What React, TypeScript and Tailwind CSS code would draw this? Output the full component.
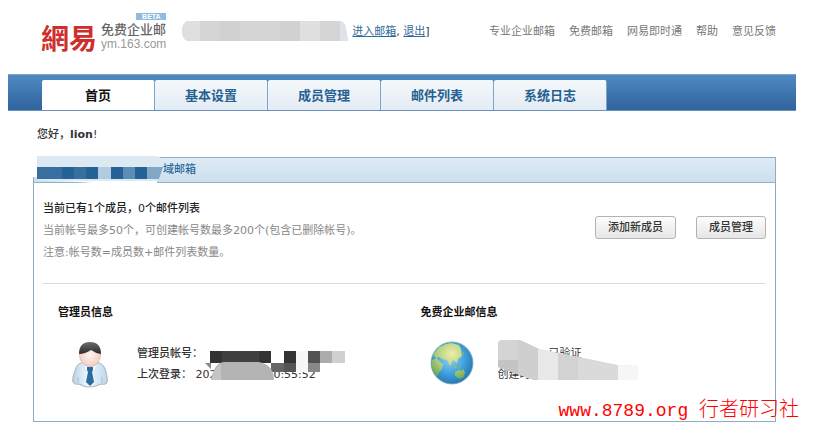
import { clsx } from 'clsx';

const tabs = ['首页', '基本设置', '成员管理', '邮件列表', '系统日志'];

const topLinks = ['专业企业邮箱', '免费邮箱', '网易即时通', '帮助', '意见反馈'];

const Logo = () => (
  <a href="#" className="relative flex items-center">
    <span className="w-[60px] text-[28px] leading-[30px] font-bold text-[#cf2f2c] font-['Noto_Sans_CJK_TC',sans-serif]">
      網易
    </span>
    <span className="flex flex-col text-[13px] leading-[14px]">
      <span className="font-medium text-[#666]">免费企业邮</span>
      <span className="text-xs leading-[14px] text-[#999] font-['Liberation_Sans',sans-serif]">ym.163.com</span>
    </span>
    <span className="absolute -top-[9px] right-0 w-[30px] bg-[#8fbce0] text-center text-[7px] leading-[7px] font-bold text-white font-['Liberation_Sans',sans-serif]">
      BETA
    </span>
  </a>
);

const MaskedAccount = () => (
  <svg width="166" height="21" viewBox="0 0 166 21" aria-hidden="true">
    <defs>
      <clipPath id="account">
        <path d="M5 0H159Q164 3 164 8L166 20H5Q0 17 0 10Q0 3 5 0Z" />
      </clipPath>
    </defs>
    <g clipPath="url(#account)">
      <path fill="#d5d5d5" d="M0 0h166v21H0z" />
      <path fill="#dfdfdf" d="M0 0h18v21H0zM118 0h20v21h-20z" />
      <path fill="#d1d1d1" d="M38 0h20v21H38zM98 0h20v21H98z" />
      <path fill="#dce3e9" d="M158 0h8v21h-8z" />
    </g>
  </svg>
);

const MaskedDomain = () => (
  <svg width="130" height="29" viewBox="0 0 130 29" aria-hidden="true">
    <path fill="#fff" d="M0 0h4v22H0z" />
    <path fill="#fff" d="M4 0h120v4H4z" />
    <path fill="#dce9f3" d="M4 1H124L128 3V17L124 27H26L4 25Z" />
    <path fill="#386f9f" d="M4 12h25v12H4z" />
    <path fill="#256297" d="M29 12h12v12H29zM53 12h12v12H53zM78 12h12v12H78zM102 12h12v12h-12z" />
    <path fill="#386f9f" d="M41 12h12v12H41z" />
    <path fill="#256297" d="M53 12h12v12H53z" />
    <path fill="#b3cbe0" d="M65 12h13v12H65z" />
    <path fill="#5d8cb4" d="M90 12h12v12H90z" />
    <path fill="#82a6c6" d="M114 12h16l-4 12h-12z" />
    <path fill="#fff" d="M28 26H124V28H60Z" />
  </svg>
);

const MaskedLogin = () => (
  <svg width="140" height="32" viewBox="0 0 140 32" aria-hidden="true">
    <path fill="#333" d="M5 2h12v12H5zM54 2h12v12H54zM79 2h12v12H79z" />
    <path fill="#404040" d="M17 2h37v12H17z" />
    <path fill="#525252" d="M103 2h12v12h-12z" />
    <path fill="#acacac" d="M115 2h12v12h-12z" />
    <path fill="#d0d0d0" d="M127 2h13v12h-13z" />
    <path fill="#f7f7f7" d="M91 2h12v21H91z" />
    <path fill="#666" d="M66 14h13v9H66z" />
    <path fill="#555" d="M79 14h12v9H79z" />
    <path fill="#888" d="M103 14h12v9h-12z" />
    <path fill="#888" d="M0 14h6v6z" />
    <path fill="#b4b4b4" d="M6 31Q9 14 19 13H54Q69 16 69 31Z" />
    <path fill="#c4c4c4" d="M6 31Q8 20 16 15V31Z" />
  </svg>
);

const MaskedDetails = () => (
  <svg width="140" height="42" viewBox="0 0 140 42" aria-hidden="true">
    <defs>
      <clipPath id="details">
        <path d="M0 3Q1 0 4 0H22L41 9L80 17L119 25L140 26V40H36L14 32L0 27Z" />
      </clipPath>
    </defs>
    <g clipPath="url(#details)">
      <path fill="#d4d4d4" d="M0 0h140v42H0z" />
      <path fill="#c4c4c4" d="M0 20h20v22H0z" />
      <path fill="#cfcfcf" d="M20 0h20v42H20z" />
      <path fill="#e8e8e8" d="M40 0h20v42H40z" />
      <path fill="#d2d2d2" d="M60 0h20v42H60z" />
      <path fill="#dadada" d="M80 0h40v42H80z" />
      <path fill="#f6f6f6" d="M120 0h20v42h-20z" />
    </g>
  </svg>
);

const UserIcon = () => (
  <svg width="38" height="48" viewBox="0 0 38 48" className="shrink-0" aria-hidden="true">
    <defs>
      <linearGradient id="shirt" x1="0" y1="0" x2="1" y2="0">
        <stop offset="0" stopColor="#b7d4ec" />
        <stop offset=".45" stopColor="#f0f7fd" />
        <stop offset="1" stopColor="#bdd8ee" />
      </linearGradient>
      <radialGradient id="face">
        <stop offset="0" stopColor="#fff4ef" />
        <stop offset="1" stopColor="#f3cfc5" />
      </radialGradient>
      <linearGradient id="hair" x1="0" y1="0" x2="0" y2="1">
        <stop offset="0" stopColor="#6b6b6b" />
        <stop offset="1" stopColor="#2c2c2c" />
      </linearGradient>
    </defs>
    <path d="M10 22Q6 23 4 30Q1 37 2 41Q4 44 8 43Q18 49 30 43Q35 44 36 41Q37 36 34 28Q32 23 28 22Z" fill="url(#shirt)" stroke="#b4bac1" strokeWidth="1.2" />
    <path d="M7 36V42M31 36V42" stroke="#a9bccd" strokeWidth="1" />
    <path d="M12 24L19 26L26 24L23 31L19 27L15 31Z" fill="#f5f9fd" stroke="#d0dce8" strokeWidth=".6" />
    <path d="M16 26H22L22 29L21 31L23 41L19 45L15 41L17 31L16 29Z" fill="#286d9e" />
    <ellipse cx="19" cy="14" rx="10.5" ry="11.5" fill="url(#face)" stroke="#d8b5aa" strokeWidth=".7" />
    <path d="M8 13Q8 1 19 1Q30 1 30 13Q24 12 20 9Q14 13 8 13Z" fill="url(#hair)" />
  </svg>
);

const GlobeIcon = () => (
  <svg width="44" height="44" viewBox="0 0 44 44" className="shrink-0" aria-hidden="true">
    <defs>
      <radialGradient id="ocean" cx=".45" cy=".4" r=".6">
        <stop offset="0" stopColor="#8fd2f3" />
        <stop offset=".6" stopColor="#409fda" />
        <stop offset="1" stopColor="#2679b4" />
      </radialGradient>
      <radialGradient id="land" cx="22" cy="13" r="26" gradientUnits="userSpaceOnUse">
        <stop offset="0" stopColor="#f0edaa" />
        <stop offset=".6" stopColor="#acce7b" />
        <stop offset="1" stopColor="#73aa55" />
      </radialGradient>
    </defs>
    <circle cx="22" cy="22" r="21" fill="url(#ocean)" stroke="#83a9bd" strokeWidth=".8" />
    <path fill="url(#land)" d="M3 14Q9 3 21 2L29 4L31 8L32 15L28 18L27 22L23 19L20 25L17 19L12 18L9 16L6 17L4 15Z" />
    <path fill="url(#land)" d="M2 19L7 17L10 21L13 23L12 28L9 31L7 36L3 30L1 24Z" />
    <path fill="url(#land)" d="M25 31L29 29L31 30L33 28L35 31L34 36L30 38L25 35Z" />
    <path fill="#90bb5a" d="M24 23L27 26L25 27ZM28 25L31 27L29 28ZM33 9L34 13L33 15Z" />
  </svg>
);

const PanelButton = ({ label }: { label: string }) => (
  <button
    type="button"
    className="h-[23px] rounded-[3px] border border-[#b3b3b3] bg-linear-to-b from-[#fdfdfd] to-[#e6e6e6] px-3 leading-5 font-medium text-[#333]"
  >
    {label}
  </button>
);

const App = () => {
  return (
    <div className="relative pl-2 pr-[23px] text-[11px] leading-[21px] text-[#333] font-['DejaVu_Sans','Noto_Sans_CJK_SC',sans-serif]">
      <header className="flex items-center h-[74px] pl-[33px] pr-5">
        <Logo />
        <div className="flex items-center gap-1 ml-4 -mt-3">
          <MaskedAccount />
          <div className="whitespace-nowrap">
            <a href="#" className="text-[#2d6a9b] underline">进入邮箱</a>, <a href="#" className="text-[#2d6a9b] underline">退出</a>]
          </div>
        </div>
        <nav className="ml-auto -mt-3 flex gap-[14px] whitespace-nowrap text-[#777]">
          {topLinks.map((link) => (
            <a key={link} href="#">{link}</a>
          ))}
        </nav>
      </header>

      <nav className="flex h-[37px] border-y border-[#7ba5cd] border-b-[#6b93b9] bg-linear-to-b from-[#5089c1] to-[#2f639d] pt-[5px] pl-[34px]">
        {tabs.map((tab, i) => (
          <a
            key={tab}
            href="#"
            className={clsx(
              'flex w-[113px] items-center justify-center rounded-t-xs border-r border-[#7fa5c5] text-[13px] font-bold',
              i === 0 ? 'bg-white text-[#111]' : 'bg-linear-to-b from-[#f5f8fb] to-[#e3ecf4] text-[#256090]'
            )}
          >
            {tab}
          </a>
        ))}
      </nav>

      <main className="pl-[25px] pr-5">
        <p className="pt-[13px] pb-3 pl-1 font-medium">
          您好，<b>lion</b>!
        </p>

        <section className="relative border border-[#8eadc3]">
          <h2 className="h-[25px] border-b border-[#8fb2c9] bg-linear-to-b from-[#dfebf5] to-[#cbdfed] pl-[129px] leading-6 font-medium text-[#2d6b98]">
            域邮箱
          </h2>
          <div className="absolute -top-[3px] -left-px">
            <MaskedDomain />
          </div>

          <div className="mx-[9px] flex items-start justify-between border-b border-[#ddd] pt-[15px] pb-[19px]">
            <div className="leading-[22px] text-[#888]">
              <p className="font-medium text-[#222]">当前已有1个成员，0个邮件列表</p>
              <p>当前帐号最多50个，可创建帐号数最多200个(包含已删除帐号)。</p>
              <p>注意:帐号数=成员数+邮件列表数量。</p>
            </div>
            <div className="flex gap-5 pt-[18px]">
              <PanelButton label="添加新成员" />
              <PanelButton label="成员管理" />
            </div>
          </div>

          <div className="flex pt-[18px] pb-8 pl-6">
            <div className="flex-1">
              <h3 className="font-bold text-[#111]">管理员信息</h3>
              <div className="flex pt-[18px] pl-[13px]">
                <UserIcon />
                <div className="relative ml-7 pt-[2px] font-medium whitespace-nowrap">
                  <p>管理员帐号：</p>
                  <p>上次登录： 2022-09-19 &nbsp;10:55:52</p>
                  <div className="absolute top-2 left-[68px]">
                    <MaskedLogin />
                  </div>
                </div>
              </div>
            </div>
            <div className="flex-1 pl-2">
              <h3 className="font-bold text-[#111]">免费企业邮信息</h3>
              <div className="flex items-start pt-[18px] pl-[9px]">
                <GlobeIcon />
                <div className="relative ml-6 pt-[2px] whitespace-nowrap">
                  <p className="pl-[51px]">已验证</p>
                  <p>创建时间</p>
                  <div className="absolute -top-px left-0">
                    <MaskedDetails />
                  </div>
                </div>
              </div>
            </div>
          </div>
        </section>
      </main>

      <p className="absolute right-5 -bottom-[3px] whitespace-nowrap text-[18px] leading-7 text-[#f00] font-['Liberation_Mono','Noto_Sans_CJK_SC',monospace]">
        www.8789.org <span className="text-xl font-light">行者研习社</span>
      </p>
    </div>
  );
};

export default App;
